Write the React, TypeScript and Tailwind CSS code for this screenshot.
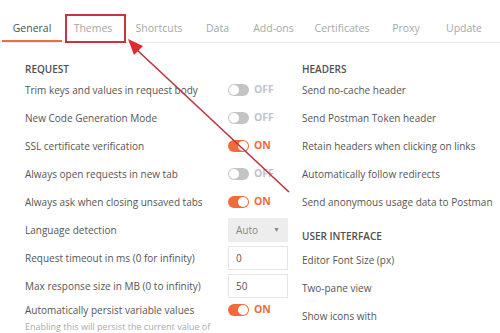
const tabs = ['General', 'Themes', 'Shortcuts', 'Data', 'Add-ons', 'Certificates', 'Proxy', 'Update']

function Toggle({ on }: { on: boolean }) {
  return (
    <div className="flex items-center gap-[5px]">
      <div
        className={
          'flex h-[12px] w-[21px] items-center rounded-full px-[1px] ' +
          (on ? 'justify-end bg-[#f26b3a]' : 'justify-start bg-[#c4c4c4]')
        }
      >
        <div className="h-[10px] w-[10px] rounded-full bg-white" />
      </div>
      <span className={'text-[10.5px] font-bold ' + (on ? 'text-[#f26b3a]' : 'text-[#c4c4c4]')}>
        {on ? 'ON' : 'OFF'}
      </span>
    </div>
  )
}

function Row({ label, children }: { label: string; children?: React.ReactNode }) {
  return (
    <div className="flex h-[28px] items-center">
      <span className="w-[203px]">{label}</span>
      <div className="w-[60px]">{children}</div>
    </div>
  )
}

export default function App() {
  return (
    <div
      className="relative h-[333px] w-[500px] overflow-hidden bg-white text-[10px] text-[#555]"
      style={{ fontFamily: '"Open Sans", sans-serif' }}
    >
      <div className="flex h-[43px] items-end border-b border-[#eaeaea] pl-[2px] text-[10.5px]">
        {tabs.map((t, i) => (
          <div
            key={t}
            className={
              'flex h-[27px] items-start justify-center pt-[6px] ' +
              (i === 0 ? 'border-b-2 border-[#f26b3a] text-[#505050]' : 'text-[#a8a8a8]')
            }
            style={{ width: [60, 62, 70, 47, 65, 72, 56, 60][i] }}
          >
            {t}
          </div>
        ))}
      </div>

      <div className="flex pl-[25px] pt-[19px]">
        <div className="w-[277px]">
          <div className="h-[14px] font-semibold leading-[14px] text-[#505050]">REQUEST</div>
          <Row label="Trim keys and values in request body"><Toggle on={false} /></Row>
          <Row label="New Code Generation Mode"><Toggle on={false} /></Row>
          <Row label="SSL certificate verification"><Toggle on /></Row>
          <Row label="Always open requests in new tab"><Toggle on={false} /></Row>
          <Row label="Always ask when closing unsaved tabs"><Toggle on /></Row>
          <Row label="Language detection">
            <div className="flex h-[24px] items-center justify-between bg-[#ededed] px-[8px] text-[#888]">
              <span>Auto</span>
              <span className="text-[7px]">▼</span>
            </div>
          </Row>
          <Row label="Request timeout in ms (0 for infinity)">
            <div className="flex h-[24px] items-center border border-[#e6e6e6] px-[7px]">0</div>
          </Row>
          <Row label="Max response size in MB (0 to infinity)">
            <div className="flex h-[24px] items-center border border-[#e6e6e6] px-[7px]">50</div>
          </Row>
          <div className="flex h-[20px] items-center">
            <span className="w-[203px]">Automatically persist variable values</span>
            <div className="w-[60px]"><Toggle on /></div>
          </div>
          <div className="text-[9px] text-[#aaa]">Enabling this will persist the current value of</div>
        </div>

        <div>
          <div className="h-[14px] font-semibold leading-[14px] text-[#505050]">HEADERS</div>
          <div className="flex h-[28px] items-center">Send no-cache header</div>
          <div className="flex h-[28px] items-center">Send Postman Token header</div>
          <div className="flex h-[28px] items-center">Retain headers when clicking on links</div>
          <div className="flex h-[28px] items-center">Automatically follow redirects</div>
          <div className="flex h-[28px] items-center whitespace-nowrap">Send anonymous usage data to Postman</div>
          <div className="flex h-[30px] items-end pb-[2px] font-semibold text-[#505050]">USER INTERFACE</div>
          <div className="flex h-[28px] items-center">Editor Font Size (px)</div>
          <div className="flex h-[28px] items-center">Two-pane view</div>
          <div className="flex h-[28px] items-center">Show icons with</div>
        </div>
      </div>

      {/* annotation overlay */}
      <div className="absolute left-[65px] top-[14px] h-[29px] w-[61px] border-2 border-[#c9343f]" />
      <svg className="pointer-events-none absolute left-0 top-0" width="500" height="333">
        <line x1="136" y1="49" x2="289" y2="192" stroke="#b8343f" strokeWidth="1.6" />
        <polygon points="128,39 143,46 134,55" fill="#e0282f" />
      </svg>
    </div>
  )
}
